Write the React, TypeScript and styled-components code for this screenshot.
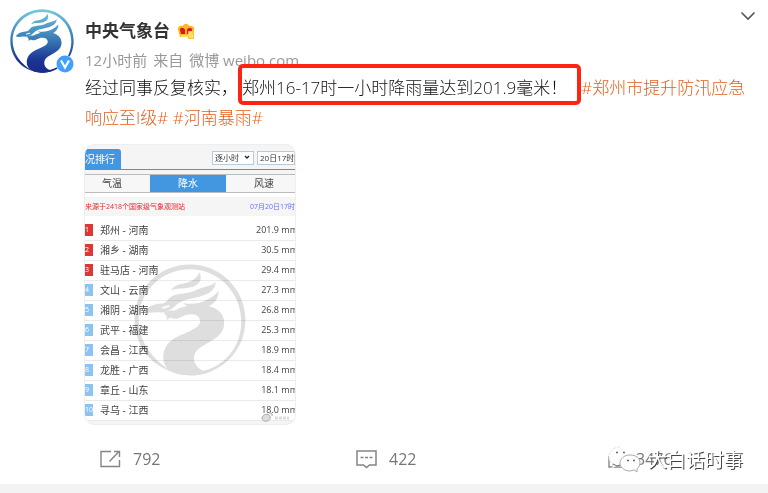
import React from "react";
import styled, { createGlobalStyle } from "styled-components";

const sans = `"Open Sans", "Noto Sans CJK SC", sans-serif`;

const GlobalStyle = createGlobalStyle`
  * { box-sizing: border-box; }
  body { margin: 0; background: #f3f3f3; font-family: ${sans}; color: #333; }
  button, select, input { font-family: inherit; }
`;

const Card = styled.article`
  position: relative;
  background: #fff;
  padding-top: 9px;
  margin-bottom: 9px;
`;

const Post = styled.div`
  display: flex;
  align-items: flex-start;
  gap: 11px;
  padding: 0 12px 0 10px;
`;

const Avatar = styled.a`
  position: relative;
  flex: none;
  width: 64px;
  height: 64px;
  svg { display: block; }
`;

const Verified = styled.svg`
  position: absolute;
  right: 0;
  bottom: 0;
`;

const Content = styled.div`
  flex: 1;
  min-width: 0;
  padding-top: 10px;
`;

const TitleRow = styled.div`
  display: flex;
  align-items: center;
  gap: 7px;
  height: 24px;
`;

const Author = styled.a`
  font-size: 17px;
  line-height: 24px;
  font-weight: 700;
  color: #333;
  text-decoration: none;
`;

const MenuButton = styled.button`
  display: flex;
  align-self: flex-start;
  margin: -8px 0 0 auto;
  padding: 0;
  border: 0;
  background: none;
`;

const Meta = styled.div`
  display: flex;
  gap: 6px;
  margin-top: 5px;
  font-size: 15px;
  line-height: 24px;
  font-weight: 400;
  color: #999;
`;

const Text = styled.p`
  margin: 1px 0 0;
  font-size: 17px;
  line-height: 30px;
  font-weight: 300;
  color: #111;
`;

const Boxed = styled.mark`
  padding: 8px 10px 2px 0;
  border: 4px solid #ff2412;
  border-radius: 5px;
  background: none;
  color: inherit;
`;

const Topic = styled.a`
  color: #e2601f;
  text-decoration: none;
`;

const Picture = styled.figure`
  position: relative;
  width: 210px;
  margin: 12px 0 0;
  padding-bottom: 3px;
  border-radius: 10px;
  overflow: hidden;
  background: #f5f5f5;
  box-shadow: 0 0 0 1px #eee;
  font-size: 10px;
`;

const PanelHead = styled.div`
  display: flex;
  align-items: flex-end;
  gap: 3px;
  height: 25px;
  border-bottom: 1px solid #4397e0;
`;

const PanelTitle = styled.h3`
  width: 36px;
  height: 20px;
  margin: 0 auto 0 0;
  border-radius: 0 3px 0 0;
  background: #4397e0;
  color: #fff;
  font-size: 10px;
  line-height: 21px;
  font-weight: 400;
`;

const SelectWrap = styled.label`
  position: relative;
  height: 14px;
  margin-bottom: 4px;
  svg { position: absolute; right: 4px; top: 4px; }
`;

const Select = styled.select<{ $width: number }>`
  appearance: none;
  display: block;
  width: ${(p) => p.$width}px;
  height: 14px;
  padding: 0 0 0 2px;
  border: 1px solid #b9cbd8;
  border-radius: 0;
  background: #fff;
  color: #333;
  font-size: 8px;
  line-height: 12px;
`;

const Tabs = styled.div`
  display: grid;
  grid-template-columns: repeat(3, 76px);
  margin: 4px 0 0 -11px;
  border-top: 1px solid #bbb;
  border-bottom: 1px solid #bbb;
`;

const Tab = styled.button<{ $on?: boolean }>`
  height: 17px;
  padding: 0;
  border: 0;
  background: ${(p) => (p.$on ? "#4397e0" : "#f7f7f7")};
  color: ${(p) => (p.$on ? "#fff" : "#444")};
  font-size: 10px;
  line-height: 17px;
`;

const Notice = styled.div`
  display: flex;
  justify-content: space-between;
  height: 27px;
  padding-top: 4px;
  border-top: 4px solid #fff;
  border-bottom: 4px solid #fff;
  background: #f5f5f5;
  font-size: 7px;
  line-height: 12px;
  white-space: nowrap;
  color: #f02330;
`;

const Stamp = styled.time`
  color: #6670ee;
`;

const Ranking = styled.table`
  width: calc(100% + 3px);
  border-collapse: collapse;
  background: #fff;
  color: #444;
  td { height: 20px; padding: 0; border-bottom: 1px solid #eaeaea; line-height: 14px; white-space: nowrap; }
`;

const Rank = styled.span<{ $top: boolean }>`
  display: block;
  width: 8px;
  height: 12px;
  background: ${(p) => (p.$top ? "#dd3835" : "#8dc3f0")};
  color: #fff;
  font-size: 7px;
  line-height: 12px;
`;

const RankCell = styled.td`
  width: 15px;
`;

const Amount = styled.td`
  font-size: 9px;
  text-align: right;
`;

const Watermark = styled.div`
  position: absolute;
  left: 49px;
  top: 119px;
  mix-blend-mode: multiply;
  svg { display: block; }
`;

const Corner = styled.svg`
  position: absolute;
  right: 4px;
  bottom: 2px;
`;

const Actions = styled.footer`
  display: grid;
  grid-template-columns: repeat(3, 1fr);
  margin-top: 11px;
`;

const Action = styled.button<{ $tight?: boolean }>`
  display: flex;
  align-items: center;
  gap: ${(p) => (p.$tight ? 10 : 12)}px;
  height: 49px;
  padding: 0 0 0 ${(p) => (p.$tight ? 96 : 100)}px;
  border: 0;
  background: none;
  color: #777;
  font-size: 16px;
  line-height: 24px;
`;

const Signature = styled.div`
  position: absolute;
  right: 25px;
  bottom: 9px;
  display: flex;
  align-items: center;
  gap: 7px;
  color: #fff;
  font-size: 19px;
  line-height: 30px;
  font-weight: 400;
  text-shadow: 1px 1px 0 #444;
`;

function Dragon({ size, mono }: { size: number; mono?: boolean }) {
  const paint = mono ? "#dedede" : "url(#dragon-paint)";
  return (
    <svg width={size} height={size} viewBox="0 0 190 190" aria-hidden="true">
      <defs>
        <linearGradient id="dragon-paint" x1="0" y1="0" x2="0" y2="190" gradientUnits="userSpaceOnUse">
          <stop offset="0" stopColor="#75cbdc" />
          <stop offset="0.45" stopColor="#3b7fb8" />
          <stop offset="0.8" stopColor="#1b3594" />
          <stop offset="1" stopColor="#182b88" />
        </linearGradient>
      </defs>
      <g fill={paint}>
        <path
          fillRule="evenodd"
          d="M66 183C27 172 1 136 1 94C1 42 43 1 95 1s94 42 94 94c0 49-37 90-87 94c-14 0-25-2-36-6L68 180C90 187 112 185 131 177c31-13 51-44 51-79C182 48 143 9 95 9C47 9 8 47 8 95c0 36 23 68 58 88Z"
        />
        <path d="M84 73C112 64 153 70 153 100c0 31-44 34-50 53c-5 15 5 27 23 31c-18 7-48 7-64-2c-17-11-16-38 0-51c17-14 52-19 50-35c-2-13-19-13-30-7c-10 5-15 5-22 1c4-8 11-14 24-17Z" />
        <path d="M17 81c7-9 16-13 29-14c7 0 9-4 14-9c11-11 28-5 46-14c14-7 24-5 33-14c-2 16-13 21-27 25c-18 5-30 5-40 14c-10 10-18 14-31 13c-8-1-15 3-24-1Z" />
        <path d="M63 45c6-12 19-10 29-14c9-3 16-9 19-17c7 14-3 24-17 26c-12 3-21 0-31 5Z" />
        <path d="M83 66c22 5 43-2 61-20c-1 20-16 29-36 29c-12 0-19-3-25-9Z" />
        <path d="M50 83c5-3 12-5 19-4c-3 9-8 13-14 16c2-5 0-9-5-12Z" />
      </g>
      <path d="M48 75l12-4" stroke="#fff" strokeWidth="3" />
    </svg>
  );
}

function Crown() {
  return (
    <svg width="18" height="18" viewBox="0 0 18 18" aria-hidden="true">
      <path d="M3 15L1 8c-1-3 2-5 5-4c1-3 5-3 6 0c3-1 6 1 5 4l-2 7Z" fill="#ffb81e" />
      <path d="M4 12L3 8c0-3 4-3 5 0v4Zm6 0V8c1-3 5-3 5 0l-1 4Z" fill="#d71920" />
      <path d="M4 14h8" stroke="#ffdd61" strokeWidth="2" />
      <rect x="11" y="9" width="6" height="8" rx="1" fill="#ffc52e" />
      <path d="M15.500 11h-3v4h3v-2h-2.500" fill="none" stroke="#fff2ad" strokeWidth="1" />
    </svg>
  );
}

const rows: [string, string][] = [
  ["郑州 - 河南", "201.9"],
  ["湘乡 - 湖南", "30.5"],
  ["驻马店 - 河南", "29.4"],
  ["文山 - 云南", "27.3"],
  ["湘阴 - 湖南", "26.8"],
  ["武平 - 福建", "25.3"],
  ["会昌 - 江西", "18.9"],
  ["龙胜 - 广西", "18.4"],
  ["章丘 - 山东", "18.1"],
  ["寻乌 - 江西", "18.0"],
];

function RainRanking() {
  return (
    <Picture>
      <PanelHead>
        <PanelTitle>况排行</PanelTitle>
        <SelectWrap>
          <Select $width={42} aria-label="时段"><option>逐小时</option></Select>
          <svg width="6" height="5" viewBox="0 0 6 5"><path d="M1 1l2 2 2-2" fill="none" stroke="#222" strokeWidth="1.300" /></svg>
        </SelectWrap>
        <SelectWrap>
          <Select $width={38} aria-label="时间"><option>20日17时</option></Select>
        </SelectWrap>
      </PanelHead>
      <Tabs>
        <Tab>气温</Tab>
        <Tab $on>降水</Tab>
        <Tab>风速</Tab>
      </Tabs>
      <Notice>
        <span>来源于2418个国家级气象观测站</span>
        <Stamp>07月20日17时</Stamp>
      </Notice>
      <Ranking>
        <tbody>
          {rows.map(([place, mm], i) => (
            <tr key={place}>
              <RankCell><Rank $top={i < 3}>{i + 1}</Rank></RankCell>
              <td>{place}</td>
              <Amount>{mm} mm</Amount>
            </tr>
          ))}
        </tbody>
      </Ranking>
      <Watermark><Dragon size={112} mono /></Watermark>
      <Corner width="30" height="11" viewBox="0 0 30 11" aria-hidden="true">
        <path d="M1 7c0-3 5-5 7-3c2 2 2 5-2 6C3 11 1 9 1 7Zm7-5c2-1 4 1 3 3" fill="#ddd" stroke="#aaa" />
        <path d="M14 7h14" stroke="#ddd" strokeWidth="3" strokeDasharray="3 1" />
      </Corner>
    </Picture>
  );
}

export default function App() {
  return (
    <>
      <GlobalStyle />
      <Card>
        <Post>
          <Avatar href="#author" aria-label="中央气象台">
            <Dragon size={64} />
            <Verified width="18" height="18" viewBox="0 0 18 18">
              <circle cx="9" cy="9" r="9" fill="#fff" />
              <circle cx="9" cy="9" r="8.500" fill="#409fff" />
              <path d="M5 5.500l4 7 4-7" fill="none" stroke="#fff" strokeWidth="2.200" />
            </Verified>
          </Avatar>
          <Content>
            <TitleRow>
              <Author href="#author">中央气象台</Author>
              <Crown />
              <MenuButton aria-label="更多">
                <svg width="16" height="10" viewBox="0 0 16 10"><path d="M1.500 1.500L8 8l6.500-6.500" fill="none" stroke="#555" strokeWidth="1.600" /></svg>
              </MenuButton>
            </TitleRow>
            <Meta>
              <time>12小时前</time>
              <span>来自</span>
              <span>微博 weibo.com</span>
            </Meta>
            <Text>
              经过同事反复核实，<Boxed>郑州16-17时一小时降雨量达到201.9毫米！</Boxed>
              <Topic href="#flood">#郑州市提升防汛应急响应至I级#</Topic>{" "}
              <Topic href="#rain">#河南暴雨#</Topic>
            </Text>
            <RainRanking />
          </Content>
        </Post>
        <Actions>
          <Action aria-label="转发 792">
            <svg width="21" height="18" viewBox="0 0 21 18" fill="none" stroke="#858585" strokeWidth="1.400">
              <path d="M11 1.500H1v15h18.500V10M9.500 11.500L19 1.500M14 1.500h5.500V7" />
            </svg>
            792
          </Action>
          <Action aria-label="评论 422">
            <svg width="21" height="20" viewBox="0 0 21 20" fill="none" stroke="#858585" strokeWidth="1.500">
              <path d="M1 2h19v14h-6.500L10.500 18.500L7.500 16H1ZM4.500 8.500h3m1.500 0h3m1.500 0h3" />
            </svg>
            422
          </Action>
          <Action $tight aria-label="赞 3476">
            <svg width="18" height="18" viewBox="0 0 18 18" fill="none" stroke="#858585" strokeWidth="1.400">
              <path d="M1 7h4v10H1ZM5 7c3-1 4-3 5-6c3 1 2 4 1 6h6v8l-2 2H5" />
            </svg>
            3476
          </Action>
        </Actions>
        <Signature>
          <svg width="33" height="28" viewBox="0 0 33 28" aria-hidden="true" fill="#fff">
            <path d="M12 1C6 1 1 5 1 11c0 3 1 5 4 7l-1 4 4-2h7" stroke="#e4e4e4" strokeDasharray="3 1" />
            <path d="M12 1c6 0 10 4 10 8l-7 11H8L4 11Z" />
            <path d="M22 9c-6 0-10 4-10 8s4 8 10 8l4-1 3 2v-3c2-2 3-4 3-6c0-5-4-8-10-8Z" stroke="#aaa" />
            <path d="M8 6.500h2m5 0h2m2 8h2m4 0h2" stroke="#666" strokeWidth="1.500" />
            <path d="M5 18l4 2 3-1" stroke="#666" fill="none" />
          </svg>
          <span>大白话时事</span>
        </Signature>
      </Card>
    </>
  );
}
